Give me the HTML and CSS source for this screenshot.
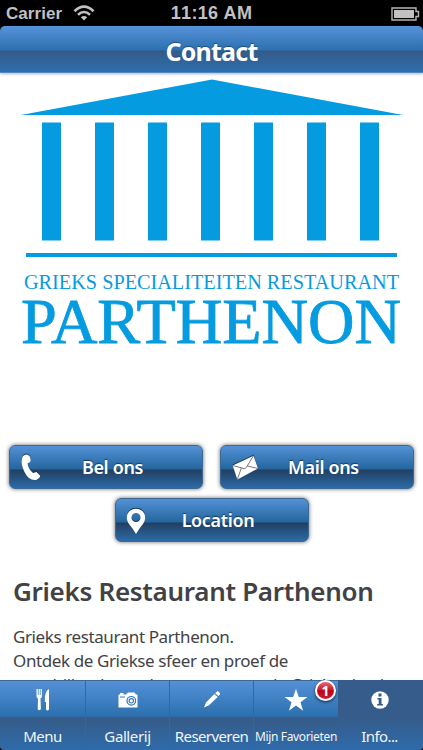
FILE: index.html
```html
<!DOCTYPE html>
<html lang="nl">
<head>
<meta charset="utf-8">
<title>Contact</title>
<link rel="stylesheet" href="styles.css">
</head>
<body>
<div class="app">
  <div class="status">
    <span class="carrier">Carrier</span>
    <svg class="wifi" width="22" height="18" viewBox="0 0 22 18" fill="none" stroke="#c1c1c1" stroke-width="2.6"><path d="M1.500 7.200Q11-1.800 20.500 7.200M5 10.800Q11 5.200 17 10.800"/><path d="M11 16.500L7.800 13.200Q11 10.600 14.200 13.200Z" fill="#c1c1c1" stroke="none"/></svg>
    <span class="clock">11:16 AM</span>
    <svg class="battery" width="29" height="14" viewBox="0 0 29 14"><path d="M1 1H25V4.500H27.500V9.500H25V13H1Z" fill="none" stroke="#b5b5b5" stroke-width="1.400"/><path d="M3 3H23V11H3Z" fill="#c1c1c1"/></svg>
  </div>
  <header class="header"><h1>Contact</h1></header>
  <main class="content">
    <svg class="logo" width="423" height="372" viewBox="0 73 423 372" fill="#059be1">
      <path d="M21 115L212 79.500L403 115Z"/>
      <path d="M42 122.500h19v118H42zM95 122.500h19v118H95zM148 122.500h19v118H148zM201 122.500h19v118H201zM254 122.500h19v118H254zM307 122.500h19v118H307zM360 122.500h19v118H360z"/>
      <path d="M26 253H397V257H26Z"/>
      <text x="24" y="289" font-size="20.800" textLength="375" lengthAdjust="spacingAndGlyphs">GRIEKS SPECIALITEITEN RESTAURANT</text>
      <text x="21" y="343" font-size="64" stroke="#059be1" stroke-width=".8" textLength="380" lengthAdjust="spacingAndGlyphs">PARTHENON</text>
    </svg>
    <div class="buttons">
      <a class="button"><svg class="btn-icon" width="20" height="27" viewBox="0 0 20 27"><path d="M6 .5L8.500 2Q10.500 6 9 8L6.500 9.500Q7.500 15 12 19L15.500 18L19 21.500Q19.500 24 15 26Q8 27 3.500 18Q-1.500 7 2 2Q4 .2 6 .5Z"/></svg><span>Bel ons</span></a>
      <a class="button"><svg class="btn-icon mail" width="27" height="26" viewBox="0 0 27 26"><path d="M.7 10.500L21.500 .7L26 13.500L5.300 24.500Z"/><path d="M.7 10.500L12.300 13.600Q14 13.500 14.500 12.200L21.500 .7M5.300 24.500L9.300 13M26 13.500L15.500 11" fill="none" stroke="#666" stroke-width=".9"/></svg><span>Mail ons</span></a>
      <a class="button"><svg class="btn-icon pin" width="20" height="27" viewBox="0 0 20 27"><path fill-rule="evenodd" d="M10 .8C4.500 .8 .8 4.800 .8 9.500C.8 14 4 17 6.500 20.500L10 26L13.500 20.500C16 17 19.200 14 19.200 9.500C19.200 4.800 15.500 .8 10 .8ZM10 5A4.500 4.500 0 1 1 10 14A4.500 4.500 0 1 1 10 5Z"/></svg><span>Location</span></a>
    </div>
    <h2>Grieks Restaurant Parthenon</h2>
    <p>Grieks restaurant Parthenon.<br>Ontdek de Griekse sfeer en proef de<br>verschillende smaken van <span class="end">de Griekse keuken</span></p>
  </main>
  <nav class="tabs">
    <a class="tab"><svg width="14" height="24" viewBox="0 0 14 24" fill="#fff"><path d="M.5 1H1.800V7H2.600V1H3.800V7H4.600V1H5.900V8Q5.900 10 4.500 10.500L4.900 21Q3.200 23.600 1.700 21L2 10.500Q.5 10 .5 8ZM13 1V21.500Q11.500 23.500 10 21.500V14H8.800Q8.500 3 13 1Z"/></svg><span class="t1">Menu</span></a>
    <a class="tab"><svg width="20" height="24" viewBox="0 0 20 24" fill="#fff"><path d="M1 6.500H2V5H5.500V6.500H8L10 4.500H16.500L18 6.500H19.500V19.500H.5V6.500Z"/><path d="M2 9H7" stroke="#3b7bbd"/><circle cx="13.300" cy="12.800" r="4.300" stroke="#3476b6" stroke-width="1.200"/><circle cx="13.300" cy="12.800" r="2.200" stroke="#3476b6" stroke-width="1.100"/></svg><span class="t2">Gallerij</span></a>
    <a class="tab"><svg width="18" height="24" viewBox="0 0 18 24" fill="#fff"><path d="M1 19.500L3 14.500L11.300 6L14.700 8.900L6 17.200ZM12.200 5.200L14 3.500Q15 3 16.300 4.200Q17.500 5.500 16.800 6.500L15.400 8Z"/></svg><span class="t3">Reserveren</span></a>
    <a class="tab"><svg width="24" height="24" viewBox="0 0 24 24" fill="#fff"><path d="M12 .8L14.800 9H23.500L16.500 14.300L19.100 22.700L12 17.600L4.900 22.700L7.500 14.300L.5 9H9.200Z"/></svg><span class="t4">Mijn Favorieten</span><b class="badge">1</b></a>
    <a class="tab active"><svg width="18" height="24" viewBox="0 0 18 24"><circle cx="9" cy="12" r="8.700" fill="#fff"/><path d="M7.500 5.500H10.500V8.500H7.500ZM6.500 10H10.500V16H12V17.500H6.200V16H7.700V11.500H6.500Z" fill="#365c8b"/></svg><span class="t5">Info...</span></a>
  </nav>
</div>
</body>
</html>
```
FILE: styles.css
```css
* { box-sizing: border-box; }
body { margin: 0; background: #000; font-family: "Noto Sans", "Open Sans", sans-serif; }
.app { width: 423px; height: 750px; display: flex; flex-direction: column; overflow: hidden; background: #000; }
.status { height: 26px; flex: none; display: grid; grid-template-columns: 57px 1fr 1fr 29px; column-gap: 10px; align-items: center; padding: 0 3px 0 6px; color: #c1c1c1; font: bold 17px/26px "Liberation Sans", sans-serif; position: relative; }
.carrier { letter-spacing: .05px; padding-top: 1px; }
.clock { position: absolute; left: 0; right: 0; top: 0; text-align: center; font-size: 18px; font-kerning: none; letter-spacing: .3px; }
.wifi { margin-top: -1px; }
.battery { grid-column: 4; }
.header { height: 47px; flex: none; border-radius: 5px 5px 0 0; background: linear-gradient(#5693d9 0, #2c70af 24px, #355b88 25px, #2d6ead 46px, #78a3cc 47px); box-shadow: 0 1px 3px #3a71aa80; position: relative; }
h1 { margin: 0; text-align: center; color: #fff; font-size: 25px; line-height: 50px; letter-spacing: -.8px; text-shadow: 0 -1px 1px #234d7a; }
.content { height: 607px; flex: none; overflow: hidden; background: #fff; color: #424244; }
.logo { display: block; font-family: "Liberation Serif", serif; }
.buttons { display: flex; flex-wrap: wrap; justify-content: center; gap: 9px 17px; }
.button { width: 194px; height: 44px; border-radius: 6px; display: flex; align-items: center; justify-content: center; position: relative; padding-left: 13px; color: #fff; font-size: 18px; font-weight: 600; letter-spacing: -.35px; background: linear-gradient(#5391d5 0, #24669f 23px, #233f61 24px, #2b70af 44px); border: 1px solid #3c6894; box-shadow: 0 0 4px #0009; text-shadow: 0 -1px 1px #173b60; }
.btn-icon { position: absolute; left: 11px; top: 8px; fill: #fff; filter: drop-shadow(0 -1px 0 #193653); }
.btn-icon.pin { left: 10px; top: 9px; }
.btn-icon.mail { top: 9px; }
.button span { line-height: 40px; margin-top: -1px; white-space: nowrap; }
h2 { margin: 31px 0 0 13px; font-size: 26px; font-weight: 600; line-height: 37px; letter-spacing: -.3px; white-space: nowrap; }
p { margin: 15px 0 0 13px; font-size: 17px; line-height: 24px; letter-spacing: -.4px; white-space: nowrap; }
.end { margin-left: 54px; }
.tabs { height: 70px; flex: none; display: grid; grid-template-columns: 86px 84px 84px 84px 85px; border-radius: 0 0 4px 4px; background: linear-gradient(#5592d8 0, #2c70af 36px, #365b88 38px, #2e6baa 70px); box-shadow: inset 0 1px #3c6895; position: relative; }
.tab { min-width: 0; display: flex; flex-direction: column; align-items: center; padding-top: 8px; position: relative; color: #f1f5fa; font-size: 15px; border-right: 1px solid #41648b; }
.tab span { line-height: 20px; margin-top: 14px; white-space: nowrap; }
.tab:nth-child(4) { border-right: 0; }
.tab.active { border: 0; padding-right: 2px; background: linear-gradient(#365c8b 0, #365c8b 38px, #2e6baa 70px); border-radius: 0 0 4px; }
.t1 { letter-spacing: -.5px; }
.t2 { letter-spacing: -.4px; }
.t3 { letter-spacing: -.6px; }
.tab .t4 { font-size: 12px; letter-spacing: -.35px; padding-top: 1px; }
.t5 { letter-spacing: -.6px; }
.badge { position: absolute; left: 61px; top: 0; width: 21px; height: 21px; border: 2px solid #fff; border-radius: 50%; background: linear-gradient(#e36b75 0, #ce1426 48%, #bd0015 52%, #ce1d30); box-shadow: 0 1px 3px #000b; font: bold 14px/17px "Noto Sans", sans-serif; text-align: center; color: #fff; }
```
